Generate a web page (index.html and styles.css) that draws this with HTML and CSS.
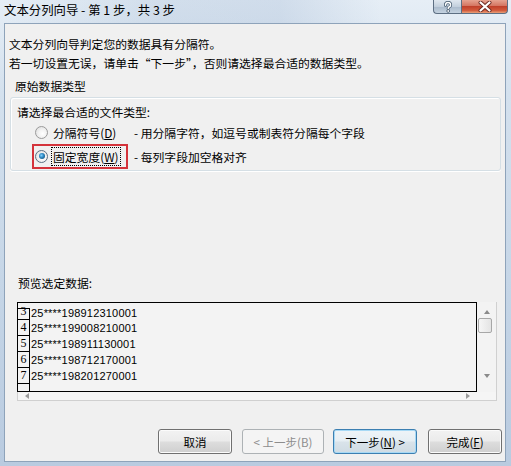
FILE: index.html
```html
<!DOCTYPE html>
<html lang="zh-CN">
<head>
<meta charset="utf-8">
<title>文本分列向导</title>
<link rel="stylesheet" href="styles.css">
</head>
<body>
<div class="window">
  <div class="titlebar">
    <span class="title">文本分列向导 - 第 1 步，共 3 步</span>
    <div class="caption">
      <span class="cap-help"><svg width="12" height="12" viewBox="0 0 12 12"><path d="M3.5 4.2 Q3.5 1.5 6 1.5 Q8.6 1.5 8.6 3.9 Q8.6 5.3 7 6 Q6.2 6.4 6.2 7.5" fill="none" stroke="#3d5368" stroke-width="3" stroke-linecap="round"/><path d="M3.5 4.2 Q3.5 1.5 6 1.5 Q8.6 1.5 8.6 3.9 Q8.6 5.3 7 6 Q6.2 6.4 6.2 7.5" fill="none" stroke="#fff" stroke-width="1.5" stroke-linecap="round"/><circle cx="6.2" cy="10" r="1.4" fill="#fff" stroke="#3d5368" stroke-width="0.8"/></svg></span>
      <span class="cap-close"><svg width="14" height="11" viewBox="0 0 14 11"><path d="M2.5 1.5 L11.5 9.5 M11.5 1.5 L2.5 9.5" stroke="#6b2a22" stroke-width="4" stroke-linecap="round"/><path d="M2.5 1.5 L11.5 9.5 M11.5 1.5 L2.5 9.5" stroke="#fff" stroke-width="2.2" stroke-linecap="round"/></svg></span>
    </div>
  </div>
  <div class="client">
    <p class="line first">文本分列向导判定您的数据具有分隔符。</p>
    <p class="line">若一切设置无误，请单击“下一步”，否则请选择最合适的数据类型。</p>
    <div class="group-label">原始数据类型</div>
    <div class="group">
      <div class="prompt">请选择最合适的文件类型:</div>
      <div class="opt-row">
        <span class="opt">
          <span class="radio"></span>
          <span class="opt-text">分隔符号(<u>D</u>)</span>
        </span>
        <span class="desc">- 用分隔字符，如逗号或制表符分隔每个字段</span>
      </div>
      <div class="opt-row">
        <span class="opt hl">
          <span class="radio checked"></span>
          <span class="opt-text focus">固定宽度(<u>W</u>)</span>
        </span>
        <span class="desc">- 每列字段加空格对齐</span>
      </div>
    </div>
    <div class="preview-label">预览选定数据:</div>
    <div class="preview">
      <div class="data-box">
        <div class="row first"><span class="num">3</span><span class="val">25****198912310001</span></div>
        <div class="row"><span class="num">4</span><span class="val">25****199008210001</span></div>
        <div class="row"><span class="num">5</span><span class="val">25****198911130001</span></div>
        <div class="row"><span class="num">6</span><span class="val">25****198712170001</span></div>
        <div class="row"><span class="num">7</span><span class="val">25****198201270001</span></div>
        <div class="row"><span class="num"></span><span class="val"></span></div>
      </div>
      <div class="vscroll">
        <span class="arr up"></span>
        <span class="thumb"></span>
        <span class="arr down"></span>
      </div>
      <div class="hscroll">
        <span class="arr left"></span>
        <span class="arr right"></span>
      </div>
    </div>
    <div class="buttons">
      <button class="btn w74">取消</button>
      <button class="btn w82 disabled">&lt; 上一步(B)</button>
      <button class="btn w84 default">下一步(<u>N</u>) &gt;</button>
      <button class="btn w74">完成(<u>F</u>)</button>
    </div>
  </div>
</div>
</body>
</html>
```
FILE: styles.css
```css
html, body {
  margin: 0;
  padding: 0;
}
body {
  width: 511px;
  height: 466px;
  overflow: hidden;
  font-family: "Noto Sans CJK SC", "Liberation Sans", sans-serif;
  color: #000;
}
.window {
  width: 511px;
  height: 466px;
  box-sizing: border-box;
  padding: 0 5px 4px 4px;
  display: flex;
  flex-direction: column;
  background: linear-gradient(180deg, #e6eef6 0%, #d4e1ee 20%, #c6d6e7 60%, #b9cbe0 100%);
}
.titlebar {
  height: 23px;
  flex: none;
  display: flex;
  align-items: flex-start;
  background: linear-gradient(90deg, rgba(255,255,255,0) 0%, rgba(150,175,205,0.25) 30%, rgba(120,150,190,0.2) 55%, rgba(255,255,255,0) 75%);
}
.title {
  font-size: 12.4px;
  line-height: 20px;
  white-space: pre;
}
.caption {
  margin-left: auto;
  margin-right: -2px;
  display: flex;
}
.cap-help, .cap-close {
  height: 14px;
  display: flex;
  align-items: center;
  justify-content: center;
  box-sizing: border-box;
  border: 1px solid #5d6f83;
  border-top: none;
}
.cap-help {
  width: 28px;
  border-radius: 0 0 0 4px;
  border-right: none;
  background: linear-gradient(180deg, #dfe7ef 0%, #c3d0dd 50%, #a9bacb 51%, #c4d2e0 100%);
}
.cap-close {
  width: 47px;
  border-radius: 0 0 4px 0;
  background: linear-gradient(180deg, #e6a391 0%, #d47561 45%, #c0412b 50%, #d25a3c 80%, #e9a17a 100%);
}
.client {
  flex: 1;
  background: #f0f0f0;
  border: 1px solid #8ea3ba;
  padding-top: 10px;
  font-size: 11.8px;
}
.line {
  margin: 0;
  padding-left: 4px;
  line-height: 19px;
  white-space: nowrap;
}
.group-label {
  margin: 5px 0 0 10px;
  line-height: 18px;
}
.group {
  margin: 2px 0 0 5px;
  width: 491px;
  box-sizing: border-box;
  height: 74px;
  border: 1px solid #d5dfe5;
  border-radius: 3px;
  box-shadow: inset 1px 1px 0 #fff, 0 1px 0 #fff;
  padding: 5px 0 0 6px;
}
.prompt {
  line-height: 17px;
}
.opt-row {
  height: 24px;
  display: flex;
  align-items: center;
  margin-left: 18px;
}
.opt {
  width: 99px;
  display: flex;
  align-items: center;
  box-sizing: border-box;
  height: 24px;
}
.opt.hl {
  width: 96px;
  margin-left: -3px;
  margin-right: 6px;
  height: 25px;
  border: 2px solid #d4333b;
  padding-left: 1px;
}
.radio {
  width: 13px;
  height: 13px;
  box-sizing: border-box;
  border-radius: 50%;
  border: 1px solid #9a9a9a;
  background: radial-gradient(circle at 60% 60%, #ffffff 0%, #f3f3f3 40%, #d9d9d9 100%);
  display: flex;
  align-items: center;
  justify-content: center;
  flex: none;
}
.radio.checked {
  border-color: #5a6f82;
}
.radio.checked::after {
  content: "";
  width: 6px;
  height: 6px;
  border-radius: 50%;
  background: radial-gradient(circle at 40% 40%, #7fd0ff 0%, #2a84bd 45%, #0c3e63 100%);
}
.opt-text {
  margin-left: 5px;
  line-height: 17px;
  white-space: nowrap;
}
.opt-text.focus {
  outline: 1px dotted #000;
  outline-offset: 0;
  padding: 0 1px;
  margin-left: 4px;
}
.desc {
  white-space: nowrap;
}
.preview-label {
  margin: 103px 0 0 13px;
  line-height: 18px;
}
.preview {
  margin: 10px 0 0 12px;
  width: 480px;
  height: 99px;
  box-sizing: border-box;
  border: 1px solid #d0d0d0;
  border-top: none;
  display: grid;
  grid-template-columns: 459px 19px;
  grid-template-rows: 90px 8px;
  background: #f4f4f4;
}
.data-box {
  border: 1px solid #000;
  background: #f3f3f3;
  overflow: hidden;
  margin-left: -1px;
}
.row {
  display: flex;
  height: 16px;
  align-items: stretch;
}
.row.first {
  height: 17px;
}
.num {
  width: 11px;
  flex: none;
  border-right: 1px solid #000;
  border-bottom: 1px solid #000;
  font-family: "Liberation Serif", serif;
  font-size: 12px;
  line-height: 16px;
  text-align: center;
  display: flex;
  align-items: flex-end;
  justify-content: center;
}
.row.first .num {
  margin-top: 5px;
  border-top: 1px solid #000;
}
.val {
  font-family: "Liberation Sans", sans-serif;
  font-size: 11px;
  line-height: 15px;
  padding-top: 1px;
  padding-left: 1px;
  letter-spacing: 0.2px;
}
.row.first .val {
  padding-top: 3px;
}
.vscroll {
  display: flex;
  flex-direction: column;
  align-items: center;
  background: #f3f3f3;
}
.vscroll .thumb {
  width: 14px;
  height: 15px;
  box-sizing: border-box;
  border: 1px solid #a7a7a7;
  border-radius: 2px;
  background: linear-gradient(90deg, #f6f6f6, #e4e4e4);
  margin-top: 4px;
  margin-left: -3px;
}
.arr {
  width: 0;
  height: 0;
  border: 3px solid transparent;
}
.arr.up {
  margin-top: 8px;
  border-bottom: 4px solid #8a8a8a;
  border-top-width: 0;
}
.arr.down {
  margin-top: 41px;
  border-top: 4px solid #8a8a8a;
  border-bottom-width: 0;
}
.hscroll {
  grid-column: 1 / 3;
  display: flex;
  justify-content: space-between;
  align-items: center;
  padding: 0 26px 0 7px;
  background: #f5f5f5;
}
.arr.left {
  border-right: 4px solid #9a9a9a;
  border-left-width: 0;
}
.arr.right {
  border-left: 4px solid #9a9a9a;
  border-right-width: 0;
}
.buttons {
  margin: 28px 3px 0 0;
  display: flex;
  justify-content: flex-end;
}
.btn {
  height: 25px;
  box-sizing: border-box;
  border: 1px solid #707070;
  border-radius: 3px;
  background: linear-gradient(180deg, #f2f2f2 0%, #ebebeb 48%, #dddddd 52%, #cfcfcf 100%);
  box-shadow: inset 0 0 0 1px #fbfbfb;
  font-family: "Noto Sans CJK SC", sans-serif;
  font-size: 11.5px;
  color: #000;
  padding: 0;
  line-height: 20px;
  margin-left: 10px;
}
.btn.w74 { width: 74px; }
.btn.w82 { width: 82px; }
.btn.w84 { width: 84px; margin-left: 9px; }
.btn.w84 + .btn { margin-left: 11px; }
.btn.disabled {
  border-color: #adb2b5;
  background: #f4f4f4;
  color: #8d8d8d;
  box-shadow: none;
}
.btn.default {
  border-color: #3c7fb1;
  box-shadow: inset 0 0 0 1px #a7d9f5;
  background: linear-gradient(180deg, #eef4f8 0%, #e6eef3 48%, #d9e3ea 52%, #cfdbe3 100%);
}
u {
  text-decoration: underline;
  text-underline-offset: 1px;
}
```
